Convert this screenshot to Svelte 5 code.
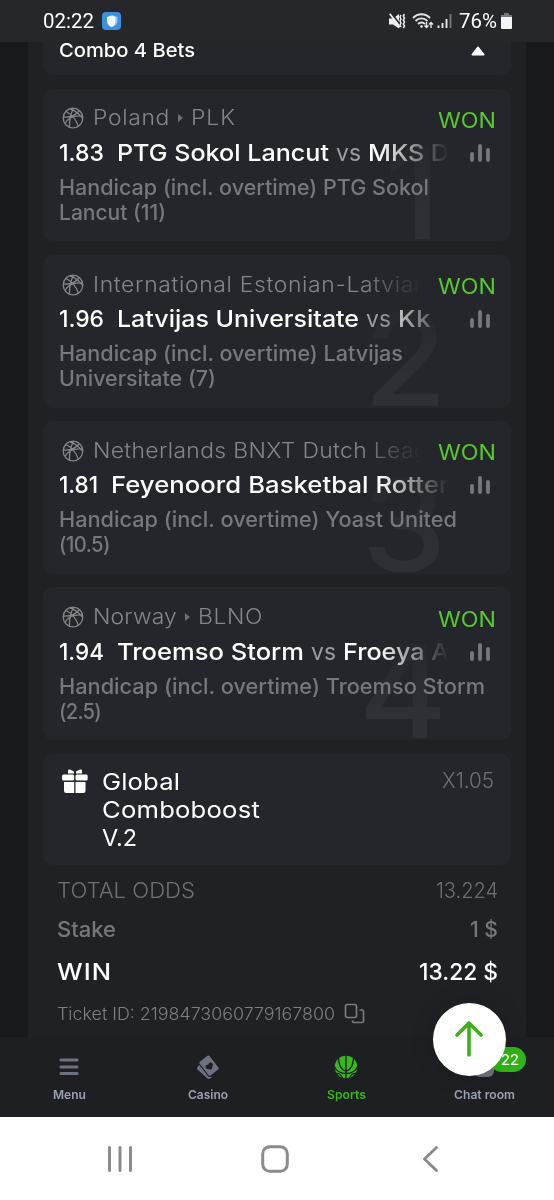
<script lang="ts">
	type Run = { text: string; width: number };
	type Bet = {
		league: Run[];
		odds: Run;
		teams: Run[];
		market: Run[];
	};

	const bets: Bet[] = [
		{
			league: [{ text: 'Poland', width: 77 }, { text: 'PLK', width: 45 }],
			odds: { text: '1.83', width: 45 },
			teams: [{ text: 'PTG Sokol Lancut', width: 212 }, { text: 'MKS D', width: 81 }],
			market: [{ text: 'Handicap (incl. overtime) PTG Sokol', width: 370 }, { text: 'Lancut (11)', width: 107 }]
		},
		{
			league: [{ text: 'International Estonian-Latvian', width: 335 }],
			odds: { text: '1.96', width: 45 },
			teams: [{ text: 'Latvijas Universitate', width: 242 }, { text: 'Kk', width: 33 }],
			market: [{ text: 'Handicap (incl. overtime) Latvijas', width: 344 }, { text: 'Universitate (7)', width: 157 }]
		},
		{
			league: [{ text: 'Netherlands BNXT Dutch Leag', width: 335 }],
			odds: { text: '1.81', width: 39 },
			teams: [{ text: 'Feyenoord Basketbal Rotter', width: 338 }],
			market: [{ text: 'Handicap (incl. overtime) Yoast United', width: 398 }, { text: '(10.5)', width: 51 }]
		},
		{
			league: [{ text: 'Norway', width: 84 }, { text: 'BLNO', width: 65 }],
			odds: { text: '1.94', width: 45 },
			teams: [{ text: 'Troemso Storm', width: 187 }, { text: 'Froeya A', width: 106 }],
			market: [{ text: 'Handicap (incl. overtime) Troemso Storm', width: 426 }, { text: '(2.5)', width: 42 }]
		}
	];

	const boost: Run[] = [
		{ text: 'Global', width: 78 },
		{ text: 'Comboboost', width: 158 },
		{ text: 'V.2', width: 35 }
	];

	// Widen the letters a little, then track them, so that a run takes up the given width
	function fit(node: HTMLElement, width: number) {
		const natural = node.getBoundingClientRect().width;
		const scale = Math.min(Math.max(width / natural, 0.96), 1.09);
		const spacing = (width / scale - natural) / (node.textContent ?? '').length;
		node.style.letterSpacing = `${spacing}px`;
		node.style.width = `${width}px`;
		node.style.transform = `scaleX(${scale})`;
	}
</script>

{#snippet run(item: Run)}
	<span class="run" use:fit={item.width}>{item.text}</span>
{/snippet}

<div class="screen">
	<header class="status">
		<div class="clock">
			{@render run({ text: '02:22', width: 51 })}
			<svg class="shield" width="19" height="18" viewBox="0 0 19 18">
				<rect width="19" height="18" rx="4" fill="#3b91dc" />
				<path d="M10 3l5.500 2v4c0 3-2 5-5 6z" fill="#8ec6f1" />
				<path d="M9.500 3.500l4 1.500v4c0 3-1.500 5-4 6.300C7 14 5 12 5 9V5z" fill="#f2f8fd" />
			</svg>
		</div>
		<div class="indicators">
			<svg width="17" height="17" viewBox="0 0 17 17" fill="#eee">
				<path d="M0 5.500H4L10 1v14.500L4 11.500H0z" />
				<path d="M2-.5l10 13" stroke="#26272b" stroke-width="1.600" />
				<path d="M.8.8l10 13.500" stroke="#eee" stroke-width="1.800" />
				<path d="M12 2l-1 2 1 2-1 2 1 2-1 2 1 2M15.500 1l-1.200 2 1.200 2-1.200 2 1.200 2-1.200 2 1.200 2-1.200 2" fill="none" stroke="#eee" stroke-width="1.500" />
			</svg>
			<svg width="22" height="17" viewBox="0 0 22 17" fill="none" stroke="#e6e6e6" stroke-width="1.900">
				<path d="M1 5C6 0 13 0 18 5M3.500 8c3.500-3.500 8.500-3.500 12 0M6 11c2-2 5-2 7 0" />
				<circle cx="9.500" cy="13.500" r="1.300" fill="#eee" stroke="none" />
				<path d="M14.500 9v5M12.500 12.500l2 2 2-2M19 15v-5M17 11.500l2-2 2 2" stroke-width="1.400" />
			</svg>
			<svg class="signal" width="15" height="16" viewBox="0 0 15 16">
				<path d="M1.500 12.500v2.500M5.500 10v5M9.500 6v9" stroke="#e6e6e6" stroke-width="1.900" />
				<path d="M13.500 1v14" stroke="#77787b" stroke-width="1.900" />
			</svg>
			<span class="percent">{@render run({ text: '76%', width: 38 })}</span>
			<svg width="11" height="16" viewBox="0 0 11 16">
				<path d="M3 0h5v2h3v3H0V2h3z" fill="#77787b" />
				<path d="M0 4h11v11q0 1-1 1H1q-1 0-1-1z" fill="#f4f4f4" />
			</svg>
		</div>
	</header>

	<main>
		<section class="combo">
			{@render run({ text: 'Combo 4 Bets', width: 136 })}
			<svg width="14" height="10" viewBox="0 0 14 10">
				<path d="M1.500 8.500L7 1.500l5.500 7z" fill="#fff" stroke="#fff" stroke-width="2" stroke-linejoin="round" />
			</svg>
		</section>

		{#each bets as bet, i}
			<article class="bet">
				<span class="index" class:narrow={i === 0}>{i + 1}</span>
				<div class="league">
					<svg class="ball" width="22" height="22" viewBox="0 0 22 22" fill="none" stroke="#85868a" stroke-width="1.300">
						<circle cx="11" cy="11" r="9.800" />
						<path d="M4 4.500c5 2.500 10 7.500 12.500 15M8 1.800c5 1.700 9 4.700 12 9M1.200 10c6 .5 12-1.500 16-6M11.500 1.200C9 6 7.200 13 7.500 20M3 16.500C6 11 12 8 20.500 9" />
					</svg>
					<div class="league-name">
						{#each bet.league as part, p}
							{#if p > 0}
								<svg class="arrow" width="5" height="8" viewBox="0 0 5 8"><path d="M0 0l5 4-5 4z" fill="#6e6f73" /></svg>
							{/if}
							{@render run(part)}
						{/each}
					</div>
				</div>
				<span class="result">{@render run({ text: 'WON', width: 58 })}</span>
				<div class="match">
					<span class="odds">{@render run(bet.odds)}</span>
					{#each bet.teams as team, t}
						{#if t > 0}
							<span class="versus">{@render run({ text: 'vs', width: 25 })}</span>
						{/if}
						{@render run(team)}
					{/each}
				</div>
				<svg class="stats" width="20" height="18" viewBox="0 0 20 18" stroke="#77787c" stroke-width="3.800" stroke-linecap="round">
					<path d="M2 10v6M10 2v14M18 6v10" />
				</svg>
				<div class="market">
					{#each bet.market as line}
						<div>{@render run(line)}</div>
					{/each}
				</div>
			</article>
		{/each}

		<section class="boost">
			<svg class="gift" width="26" height="24" viewBox="0 0 26 24" fill="#fff">
				<path d="M6 4.500V1.500Q6 0 8 .5l4 2v2zM20 4.500V1.500Q20 0 18 .5l-4 2v2z" />
				<rect x="0" y="5.500" width="12.200" height="6" rx="1.500" />
				<rect x="13.500" y="5.500" width="12.200" height="6" rx="1.500" />
				<path d="M2 13h10.200v11H4q-2 0-2-2zM13.500 13h10v9q0 2-2 2h-8z" />
			</svg>
			<div class="boost-name">
				{#each boost as line}
					<div>{@render run(line)}</div>
				{/each}
			</div>
			<span class="boost-value">{@render run({ text: 'X1.05', width: 52 })}</span>
		</section>

		<div class="totals">
			<div class="row light">
				{@render run({ text: 'TOTAL ODDS', width: 138 })}
				{@render run({ text: '13.224', width: 62 })}
			</div>
			<div class="row stake">
				{@render run({ text: 'Stake', width: 59 })}
				{@render run({ text: '1 $', width: 28 })}
			</div>
			<div class="row win">
				{@render run({ text: 'WIN', width: 55 })}
				{@render run({ text: '13.22 $', width: 79 })}
			</div>
			<div class="row ticket">
				{@render run({ text: 'Ticket ID: 2198473060779167800', width: 278 })}
				<svg width="21" height="21" viewBox="0 0 21 21" fill="none" stroke="#7b7c80" stroke-width="1.700">
					<rect x="1.500" y="1.500" width="11" height="13" rx="2" />
					<path d="M15.500 7H18q1.500 0 1.500 1.500v9.500q0 1.500-1.500 1.500h-8q-1.500 0-1.500-1.500v-.7" />
				</svg>
			</div>
		</div>
	</main>

	<nav class="tabs">
		<div class="tab">
			<svg width="24" height="24" viewBox="0 0 24 24" stroke="#6d7180" stroke-width="3.200" stroke-linecap="round">
				<path d="M4 5h16M4 12h16M4 18.500h16" />
			</svg>
			{@render run({ text: 'Menu', width: 33 })}
		</div>
		<div class="tab">
			<svg width="24" height="24" viewBox="0 0 24 24" fill="#6d7180">
				<path d="M3.500 9.500L1.200 12.500q-.7 1 .3 1.900l10 9q1 .8 2 .3l3-1.700-4-.5z" />
				<rect x="6.500" y="1.500" width="13.500" height="18.500" rx="2" transform="rotate(-38 13 11)" stroke="#1e1f23" />
				<path d="M15.500 14.500q-6.500 0-6-3.200.5-2 2.700-1.500.7-2.800 3-2.300 3 1 .3 7z" fill="#1e1f23" />
			</svg>
			{@render run({ text: 'Casino', width: 40 })}
		</div>
		<div class="tab active">
			<svg width="24" height="24" viewBox="0 0 24 24">
				<circle cx="12" cy="12" r="11.300" fill="#38b81c" />
				<path d="M12 0v24M4.500 2.500c0 7 2 12 7.500 14M19.500 2.500c0 7-2 12-7.500 14M0 11c2 5 7 7.500 12 7.500s10-2.500 12-7.500M1 18.500c4-.5 6 .5 8 5.500M23 18.500c-4-.5-6 .5-8 5.500" fill="none" stroke="#1e1f23" stroke-width="1.300" />
			</svg>
			{@render run({ text: 'Sports', width: 39 })}
		</div>
		<div class="tab">
			<svg width="24" height="24" viewBox="0 0 24 24">
				<rect x="1" y="3" width="20" height="19" rx="6" fill="#6d7180" />
			</svg>
			{@render run({ text: 'Chat room', width: 61 })}
			<span class="badge">22</span>
		</div>
		<button class="to-top" aria-label="Scroll to top">
			<svg width="28" height="36" viewBox="0 0 28 36" fill="none" stroke="#3fae1c" stroke-width="3.600" stroke-linecap="round" stroke-linejoin="round">
				<path d="M14 34V2M2 14L14 2l12 12" />
			</svg>
		</button>
	</nav>

	<footer class="system">
		<svg width="26" height="28" viewBox="0 0 26 28" stroke="#8b8b8b" stroke-width="3" stroke-linecap="round">
			<path d="M2.500 2.500v23M13 2.500v23M23.500 2.500v23" />
		</svg>
		<svg class="home" width="28" height="28" viewBox="0 0 28 28" fill="none" stroke="#8b8b8b" stroke-width="3">
			<rect x="1.700" y="1.700" width="24.600" height="24.600" rx="7" />
		</svg>
		<svg width="17" height="28" viewBox="0 0 17 28" fill="none" stroke="#8b8b8b" stroke-width="3" stroke-linecap="round" stroke-linejoin="round">
			<path d="M14.500 2.500L2.500 14l12 11.500" />
		</svg>
	</footer>
</div>

<style>
	:global(body) {
		background: #18191d;
	}

	.screen {
		display: flex;
		flex-direction: column;
		width: 554px;
		height: 1200px;
		overflow: hidden;
		background: #18191d;
		color: #fff;
		font-family: Inter, 'Open Sans', sans-serif;
	}

	svg {
		display: block;
		flex: none;
	}

	.run {
		display: inline-block;
		flex: none;
		transform-origin: 0 50%;
		white-space: nowrap;
	}

	.status {
		display: flex;
		justify-content: space-between;
		align-items: center;
		flex: none;
		box-sizing: border-box;
		height: 42px;
		padding: 0 42px 0 43px;
		background: #26272b;
		font-family: Roboto, sans-serif;
		font-size: 21px;
	}

	.clock,
	.indicators {
		display: flex;
		align-items: center;
	}

	.clock {
		gap: 8px;
	}

	.indicators {
		gap: 6px;
	}

	.signal {
		margin-left: -3px;
	}

	.percent {
		margin: 0 -2px 0 1px;
	}

	main {
		flex: none;
		box-sizing: border-box;
		width: 498px;
		height: 995px;
		margin: 0 28px;
		padding: 0 15px;
		background: #202125;
		overflow: hidden;
	}

	.combo {
		display: flex;
		justify-content: space-between;
		align-items: center;
		box-sizing: border-box;
		height: 33px;
		padding: 0 26px 16px 15.500px;
		border-radius: 0 0 10px 10px;
		background: #25262b;
		font-size: 19px;
		font-weight: 500;
	}

	.bet {
		position: relative;
		display: grid;
		grid-template-columns: minmax(0, 1fr) 60px;
		grid-template-rows: 26px 32px 50px;
		row-gap: 6px;
		box-sizing: border-box;
		height: 152.800px;
		margin-top: 13.500px;
		padding: 16.300px 15px 0 15.500px;
		border-radius: 10px;
		background: #25262b;
		overflow: hidden;
	}

	.index {
		position: absolute;
		right: 64px;
		bottom: 2px;
		background: linear-gradient(#28292e 5%, #2f3035 70%);
		background-clip: text;
		color: transparent;
		font-size: 130px;
		font-weight: 500;
		line-height: 94px;
		transform: scaleX(1.04);
		transform-origin: 100% 50%;
	}

	.narrow {
		right: 70px;
	}

	.league,
	.match,
	.league-name {
		position: relative;
		display: flex;
		align-items: center;
	}

	.league {
		gap: 9px;
		padding-left: 3px;
		color: #85868a;
		font-size: 21px;
		font-weight: 350;
	}

	.ball {
		margin-top: 1px;
	}

	.league-name {
		width: 328px;
		overflow: hidden;
		mask-image: linear-gradient(to right, #000 82%, transparent);
	}

	.arrow {
		margin: 0 8px;
	}

	.result {
		position: relative;
		justify-self: end;
		color: #57c92c;
		font-size: 21.500px;
		line-height: 30px;
	}

	.match {
		gap: 7px;
		width: 390px;
		overflow: hidden;
		mask-image: linear-gradient(to right, #000 82%, transparent);
		font-size: 23.500px;
		font-weight: 550;
		line-height: 34px;
	}

	.odds {
		margin-right: 6px;
	}

	.versus {
		color: #9c9da0;
		font-weight: 400;
	}

	.stats {
		position: relative;
		justify-self: end;
		align-self: center;
		margin-right: 6px;
	}

	.market {
		grid-column: 1 / 3;
		position: relative;
		color: #77787c;
		font-size: 21px;
		font-weight: 450;
		line-height: 25px;
	}

	.boost {
		display: flex;
		align-items: flex-start;
		box-sizing: border-box;
		height: 111px;
		margin-top: 13.500px;
		padding: 14px 17px 0 19px;
		border-radius: 10px;
		background: #25262b;
		font-size: 23.500px;
		font-weight: 400;
		line-height: 28px;
	}

	.gift {
		margin-top: 1px;
	}

	.boost-name {
		flex: 1;
		margin-left: 14px;
	}

	.boost-value {
		margin-top: -1px;
		color: #707175;
		font-size: 21px;
		font-weight: 350;
	}

	.totals {
		padding: 7px 13.500px 0 14px;
		color: #77787c;
		font-size: 21px;
		font-weight: 450;
	}

	.row {
		display: flex;
		justify-content: space-between;
		align-items: center;
		height: 37px;
	}

	.light {
		color: #707175;
		font-weight: 350;
	}

	.stake {
		height: 41px;
	}

	.win {
		height: 43px;
		color: #fff;
		font-size: 23.500px;
		font-weight: 550;
	}

	.ticket {
		justify-content: flex-start;
		gap: 9px;
		height: 42px;
		font-size: 17.500px;
		font-weight: 350;
		color: #7d7e82;
	}

	.tabs {
		position: relative;
		display: flex;
		flex: none;
		height: 80px;
		background: #1e1f23;
	}

	.tab {
		position: relative;
		display: flex;
		flex: 1;
		flex-direction: column;
		align-items: center;
		gap: 8px;
		padding-top: 18px;
		color: #9aa1b0;
		font-size: 12px;
		font-weight: 600;
		line-height: 16px;
	}

	.active {
		color: #38b81c;
	}

	.badge {
		position: absolute;
		top: 10px;
		right: 28px;
		box-sizing: border-box;
		width: 37px;
		height: 25px;
		padding-right: 7px;
		border-radius: 13px;
		background: #31b516;
		color: #fff;
		font-size: 15px;
		font-weight: 400;
		line-height: 25px;
		text-align: right;
	}

	.to-top {
		position: absolute;
		top: -34px;
		right: 48px;
		display: flex;
		align-items: center;
		justify-content: center;
		width: 73px;
		height: 73px;
		padding: 0 2px 1px 0;
		border: none;
		border-radius: 50%;
		background: #fff;
		box-shadow: 0 0 24px rgba(0, 0, 0, 0.15);
	}

	.system {
		display: flex;
		align-items: center;
		justify-content: space-between;
		flex: 1;
		padding: 1px 115px 0 107px;
		background: #fff;
	}

	.home {
		margin-right: 5px;
	}
</style>
